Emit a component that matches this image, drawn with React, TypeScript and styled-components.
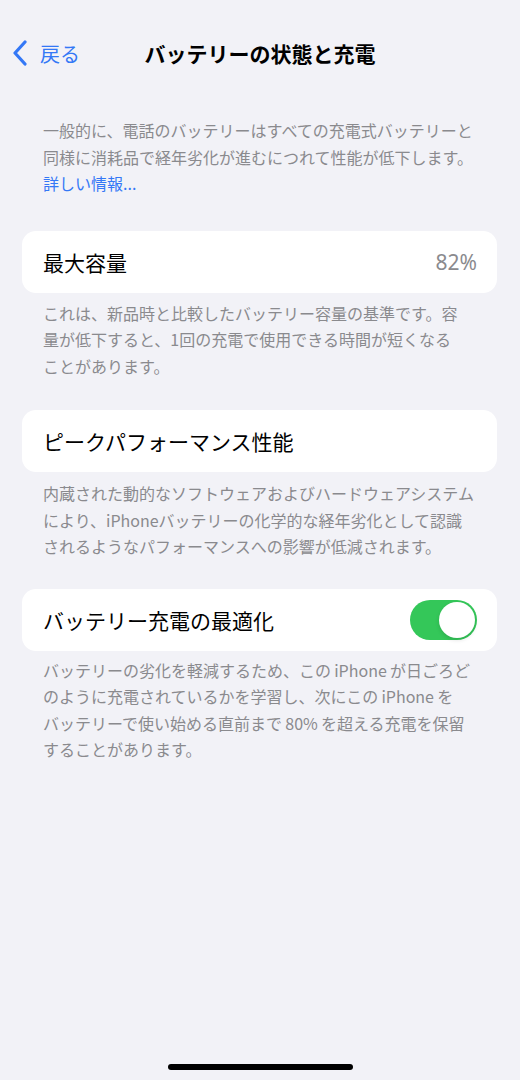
import React from 'react';
import styled, { createGlobalStyle } from "styled-components";

const GlobalStyle = createGlobalStyle`
  html, body {
    margin: 0;
    padding: 0;
    background-color: #f2f2f7;
  }
  body {
    font-family: "Noto Sans CJK JP", "Noto Sans", sans-serif;
    -webkit-font-smoothing: antialiased;
  }
`

const Screen = styled.div`
  width: 520px;
  height: 1080px;
  background-color: #f2f2f7;
  display: flex;
  flex-direction: column;
  overflow: hidden;
`

const NavBar = styled.div`
  display: grid;
  grid-template-columns: 1fr auto 1fr;
  align-items: center;
  height: 46px;
  margin-top: 30px;
  padding: 0 12px;
`

const BackButton = styled.div`
  display: flex;
  align-items: center;
  gap: 12px;
  color: #3478f6;
  font-size: 20px;
  cursor: pointer;
`

const NavTitle = styled.div`
  font-size: 21px;
  font-weight: 700;
  color: #000000;
`

const Content = styled.div`
  display: flex;
  flex-direction: column;
  padding: 0 23px 0 22px;
`

const Note = styled.p<{top: number}>`
  margin: ${({top}) => top}px 0 0;
  padding: 0 21px;
  font-size: 16px;
  line-height: 26.5px;
  color: #8a8a8e;
  white-space: nowrap;
`

const Link = styled.span`
  color: #3478f6;
`

const Card = styled.div<{top: number}>`
  display: flex;
  align-items: center;
  justify-content: space-between;
  height: 62px;
  margin-top: ${({top}) => top}px;
  padding: 0 20px 0 21px;
  background-color: #ffffff;
  border-radius: 14px;
`

const Label = styled.div`
  font-size: 21px;
  color: #000000;
`

const Value = styled.div`
  font-size: 21px;
  color: #8a8a8e;
  font-family: "Noto Sans", "Noto Sans CJK JP", sans-serif;
`

const Switch = styled.div<{on: boolean}>`
  display: flex;
  align-items: center;
  justify-content: ${({on}) => on ? "flex-end" : "flex-start"};
  width: 67px;
  height: 40px;
  padding: 2px;
  box-sizing: border-box;
  border-radius: 20px;
  background-color: ${({on}) => on ? "#34c759" : "#e9e9eb"};
`

const Knob = styled.div`
  width: 36px;
  height: 36px;
  border-radius: 50%;
  background-color: #ffffff;
  box-shadow: 0 2px 4px rgba(0, 0, 0, 0.12);
`

const HomeIndicator = styled.div`
  width: 185px;
  height: 6px;
  margin: auto auto 10px;
  border-radius: 3px;
  background-color: #000000;
`

export default function App() {
  return (
    <Screen>
      <GlobalStyle />
      <NavBar>
        <BackButton>
          <svg width="16" height="26" viewBox="0 0 16 26">
            <polyline points="13,2 3,13 13,24" fill="none" stroke="#3478f6" strokeWidth="3.2" strokeLinecap="round" strokeLinejoin="round" />
          </svg>
          戻る
        </BackButton>
        <NavTitle>バッテリーの状態と充電</NavTitle>
        <div />
      </NavBar>
      <Content>
        <Note top={41}>
          一般的に、電話のバッテリーはすべての充電式バッテリーと<br />
          同様に消耗品で経年劣化が進むにつれて性能が低下します。<br />
          <Link>詳しい情報...</Link>
        </Note>
        <Card top={34}>
          <Label>最大容量</Label>
          <Value>82%</Value>
        </Card>
        <Note top={7}>
          これは、新品時と比較したバッテリー容量の基準です。容<br />
          量が低下すると、1回の充電で使用できる時間が短くなる<br />
          ことがあります。
        </Note>
        <Card top={31}>
          <Label>ピークパフォーマンス性能</Label>
        </Card>
        <Note top={8}>
          内蔵された動的なソフトウェアおよびハードウェアシステム<br />
          により、iPhoneバッテリーの化学的な経年劣化として認識<br />
          されるようなパフォーマンスへの影響が低減されます。
        </Note>
        <Card top={29}>
          <Label>バッテリー充電の最適化</Label>
          <Switch on={true}>
            <Knob />
          </Switch>
        </Card>
        <Note top={6}>
          バッテリーの劣化を軽減するため、この{"\u2009"}iPhone{"\u2009"}が日ごろど<br />
          のように充電されているかを学習し、次にこの{"\u2009"}iPhone{"\u2009"}を<br />
          バッテリーで使い始める直前まで{"\u2009"}80%{"\u2009"}を超える充電を保留<br />
          することがあります。
        </Note>
      </Content>
      <HomeIndicator />
    </Screen>
  );
}
